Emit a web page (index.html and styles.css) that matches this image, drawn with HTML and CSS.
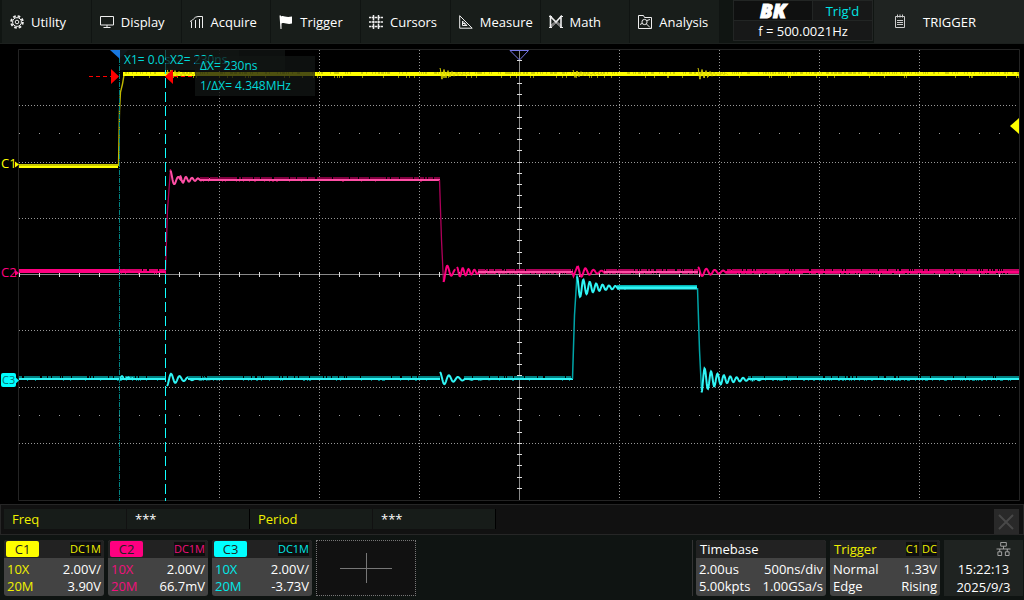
FILE: index.html
```
<!DOCTYPE html>
<html lang="en">
<head>
    <meta charset="UTF-8">
    <meta name="viewport" content="width=device-width, initial-scale=1.0">
    <title>Oscilloscope</title>
    <link rel="stylesheet" href="styles.css">
</head>
<body>

    <header class="topbar">
        <nav class="menu">
            <button class="menu-item">
                <svg class="icon" viewBox="0 0 14 14"><circle cx="7" cy="7" r="5.800" stroke-width="2" stroke-dasharray="2.600 1.950"/><circle cx="7" cy="7" r="4.400"/><circle cx="7" cy="7" r="1.800"/></svg>
                Utility
            </button>
            <button class="menu-item">
                <svg class="icon" viewBox="0 0 14 14"><path d="M0.500 1.500h13v8.500h-13zM7 10v2.500M3.500 12.500h7"/></svg>
                Display
            </button>
            <button class="menu-item">
                <svg class="icon" viewBox="0 0 14 14"><path d="M1.500 13V6.500M0 6.500C3 6 4 1.500 8 1.500h4.500V13M5.500 13V5M9.500 13V4"/></svg>
                Acquire
            </button>
            <button class="menu-item">
                <svg class="icon solid" viewBox="0 0 14 14"><path d="M0.500 0.500h1.500v1c3-1.500 4 1.500 11 0v7c-5 1.500-7-1.500-10.500 0V14H1.500z"/></svg>
                Trigger
            </button>
            <button class="menu-item">
                <svg class="icon" viewBox="0 0 14 14"><path stroke-width="1.500" stroke-dasharray="2.500 0.500" d="M4.500 0v14M9.500 0v14"/><path stroke-width="1.300" stroke-dasharray="2.500 0.500" d="M0 2.500h14M0 7h14M0 11.500h14"/></svg>
                Cursors
            </button>
            <button class="menu-item">
                <svg class="icon" viewBox="0 0 14 14"><path d="M0.700 0.700v12.500h12.500zM3.500 6v4.500h4.500zM3.500 8.500h2.500v2"/></svg>
                Measure
            </button>
            <button class="menu-item">
                <svg class="icon" viewBox="0 0 14 14"><path stroke="#888" fill="#777" d="M2 12.500V10l5-4 5 4v2.500L7 8z"/><path stroke-width="1.600" d="M1.500 12.500V1.500L7 7l5-5.500v11"/><path d="M0 1.500h3M11 1.500h3M0 12.500h3M11 12.500h3"/></svg>
                Math
            </button>
            <button class="menu-item">
                <svg class="icon" viewBox="0 0 14 14"><path d="M0.500 13.500V0.500h5l1 2h7v11z"/><circle cx="6.500" cy="7" r="2.600"/><path d="M8.500 9l3.500 3.500M2 9.500l2-1M9 5.500l3-1"/></svg>
                Analysis
            </button>
        </nav>
        <div class="state">
            <span class="brand">BK</span>
            <span class="trig-state">Trig'd</span>
            <span class="counter">f = 500.0021Hz</span>
        </div>
        <button class="side-title">
            <svg class="clip" viewBox="0 0 12 15"><path d="M1.500 2.500h9v11h-9zM3.500 0.500v3M6 0.500v3M8.500 0.500v3M3 6.500h6M3 8.500h6M3 10.500h6"/></svg>
            TRIGGER
        </button>
    </header>

    <main class="scope">
        <svg class="plot" viewBox="0 44 1024 460">
            <g class="frame"><path d="M18.500 49.500H1019.500V500.500H18.500z"/></g>
            <g id="grid"></g>
            <g id="traces"></g>
            <path class="cursor-a" d="M119.500 50V501"/>
            <path class="cursor-b" d="M165.500 50V501"/>
            <path fill="#1878e0" d="M110 50h10v9z"/>
            <path fill="#102438" d="M120 50h8l-8 8z"/>
            <path class="trig-pos" d="M510 50.500h18.500L519.500 60z"/>
            <path fill="#ff0" d="M1019 118v16l-9-8z"/>
            <path class="arrow-line" d="M89 76.500H112M174 76.500H195"/>
            <path fill="#f00" d="M111 69v15l8-7.500zM173 69v15l-8-7.500z"/>
            <text class="mark" fill="#ff0" x="1" y="168">C1</text>
            <path fill="#ff0" d="M15 161.500v6l4-3z"/>
            <text class="mark" fill="#ff0080" x="1" y="277">C2</text>
            <path fill="#ff0080" d="M15 270v6l4-3z"/>
            <rect fill="#0ff" x="1" y="373" width="15" height="14" rx="2"/>
            <path fill="#0ff" d="M14 376v9l5-4.500z"/>
            <text class="mark small" fill="#067070" x="2" y="384">C3</text>
        </svg>
        <div class="readout x1">X1= 0.0s</div>
        <div class="readout x2">X2= 230ns</div>
        <div class="readout delta">ΔX= 230ns<br>1/ΔX= 4.348MHz</div>
    </main>

    <section class="measure">
        <span class="m-name">Freq</span>
        <span class="m-value">***</span>
        <span class="m-name">Period</span>
        <span class="m-value">***</span>
        <button class="close" aria-label="Close measurements">
            <svg viewBox="0 0 24 24"><path d="M5 5l14 14M19 5L5 19"/></svg>
        </button>
    </section>

    <footer class="status">
        <button class="card ch1">
            <span class="card-head"><b class="tag">C1</b><i class="coupling">DC1M</i></span>
            <span class="row"><em>10X</em><span>2.00V/</span></span>
            <span class="row"><em>20M</em><span>3.90V</span></span>
        </button>
        <button class="card ch2">
            <span class="card-head"><b class="tag">C2</b><i class="coupling">DC1M</i></span>
            <span class="row"><em>10X</em><span>2.00V/</span></span>
            <span class="row"><em>20M</em><span>66.7mV</span></span>
        </button>
        <button class="card ch3">
            <span class="card-head"><b class="tag">C3</b><i class="coupling">DC1M</i></span>
            <span class="row"><em>10X</em><span>2.00V/</span></span>
            <span class="row"><em>20M</em><span>-3.73V</span></span>
        </button>
        <button class="add" aria-label="Add channel">
            <svg viewBox="0 0 52 30"><path d="M0 15.500h52M26.500 0v30"/></svg>
        </button>
        <div class="divider"></div>
        <button class="card timebase">
            <span class="card-head"><span class="title">Timebase</span></span>
            <span class="row"><span>2.00us</span><span>500ns/div</span></span>
            <span class="row"><span>5.00kpts</span><span>1.00GSa/s</span></span>
        </button>
        <button class="card trigger">
            <span class="card-head"><span class="title">Trigger</span><i class="coupling source">C1</i><i class="coupling">DC</i></span>
            <span class="row"><span>Normal</span><span>1.33V</span></span>
            <span class="row"><span>Edge</span><span>Rising</span></span>
        </button>
        <div class="clock">
            <svg class="lan" viewBox="0 0 15 15"><path d="M4.500 0.500h6v4h-6zM7.500 4.500v3M0 7.500h15M3.500 7.500v3M11.500 7.500v3M1.500 10.500h4v4h-4zM9.500 10.500h4v4h-4z"/></svg>
            <span>15:22:13</span>
            <span>2025/9/3</span>
        </div>
    </footer>

    <script src="scope.js"></script>
</body>
</html>
```
FILE: styles.css
```
* { box-sizing: border-box; }
body {
    margin: 0;
    min-height: 100vh;
    display: flex;
    flex-direction: column;
    background: #000;
    color: #fff;
    font-family: "Open Sans", "Noto Sans", sans-serif;
    font-size: 13px;
}
button { font: inherit; color: inherit; border: none; padding: 0; margin: 0; text-align: left; cursor: pointer; }
svg { display: block; fill: none; stroke: none; }

/* top bar */
.topbar { display: flex; height: 44px; background: #101512; border-bottom: 1px solid #1c201e; }
.menu { flex: 1; display: flex; padding-left: 2px; }
.menu-item {
    flex: 1;
    display: flex;
    align-items: center;
    gap: 7px;
    padding-left: 8px;
    background: #181d1a;
    border-right: 1px solid #101412;
}
.icon { width: 14px; height: 14px; stroke: #eee; stroke-width: 1; }
.solid { fill: #fff; stroke: none; }
.state {
    width: 140px;
    height: 41px;
    margin: 0 1px 0 13px;
    display: grid;
    grid-template-columns: 78px 1fr;
    grid-template-rows: 19px 19px;
    gap: 1px;
    padding: 1px;
    background: #222524;
    text-align: center;
    line-height: 20px;
}
.state span { background: #171818; }
.state .brand {
    background: #0f1010;
    font: italic 800 20px/19px "Open Sans", sans-serif;
    -webkit-text-stroke: 1px #fff;
}
.trig-state { color: #00e5e5; }
.counter { grid-column: 1 / 3; }
.side-title { width: 150px; display: flex; align-items: center; gap: 17px; padding-left: 20px; background: #1f2321; }
.clip { width: 12px; height: 15px; stroke: #ccc; }

/* waveform area */
.scope { position: relative; flex: 1; }
.plot { width: 100%; height: auto; }
.frame path { stroke: #242424; }
.cursor-a { stroke: #008080; stroke-dasharray: 5 1 1 1; }
.cursor-b { stroke: #1ff; stroke-dasharray: 10 4; }
.trig-pos { stroke: #7878e8; }
.arrow-line { stroke: #f00; stroke-dasharray: 4 3; }
.mark { font-size: 13px; }
.small { font-size: 11px; }
.readout {
    position: absolute;
    height: 20px;
    line-height: 20px;
    padding-left: 4px;
    color: #00d8d8;
    font-size: 12px;
    white-space: nowrap;
    background: rgba(18, 22, 20, 0.75);
}
.x1 { left: 120px; top: 6px; width: 119px; }
.x2 { left: 166px; top: 6px; width: 119px; }
.delta { left: 195px; top: 12px; width: 120px; height: 40px; padding-left: 5px; }

/* measurements */
.measure {
    display: flex;
    height: 31px;
    padding: 4px 4px 0 3px;
    border: 1px solid #262626;
    background: #111;
    line-height: 20px;
}
.m-name, .m-value { width: 123px; height: 20px; padding-left: 8px; background: #171c19; border-right: 1px solid #111; }
.m-name { color: #f0f000; }
.m-value { border-right-color: #000; }
.close { width: 25px; height: 25px; margin-left: auto; background: #292929; }
.close svg { width: 24px; height: 24px; stroke: #484848; stroke-width: 2; }

/* bottom status row */
.status { display: flex; gap: 4px; height: 65px; padding: 5px 1px 4px 4px; background: #0f1412; }
.card {
    width: 100px;
    display: flex;
    flex-direction: column;
    background: #434343;
    border-radius: 3px;
    overflow: hidden;
}
.card-head { display: flex; width: 100%; height: 18px; background: #222; line-height: 18px; align-items: center; margin-bottom: 3px; }
.tag { width: 33px; height: 16px; margin-left: 2px; border-radius: 2px; line-height: 17px; font-weight: normal; color: #222; text-align: center; }
.coupling { margin-left: auto; margin-right: 3px; font-style: normal; font-size: 11px; line-height: 14px; background: #0e0e0e; }
.row { display: flex; width: 100%; justify-content: space-between; padding: 0 3px; line-height: 17px; }
.row em { font-style: normal; }
.ch1 em, .ch1 .coupling { color: #f0f000; }
.ch2 em, .ch2 .coupling { color: #f0107c; }
.ch3 em, .ch3 .coupling { color: #00e8e8; }
.ch1 .tag { background: #ff0; }
.ch2 .tag { background: #ff0080; }
.ch3 .tag { background: #0ff; }
.add { width: 100px; display: flex; align-items: center; justify-content: center; background: #111; border: 1px dotted #777; }
.add svg { width: 52px; height: 30px; stroke: #777; }
.divider { width: 1px; margin-left: auto; margin-right: -1px; background: #333; }
.timebase { width: 130px; }
.trigger { width: 110px; }
.title { padding-left: 4px; }
.trigger .title, .trigger .coupling { color: #f0f000; }
.source + .coupling { margin-left: 0; }
.clock {
    width: 79px;
    display: flex;
    flex-direction: column;
    align-items: center;
    background: #1f2321;
    line-height: 18px;
}
.lan { width: 15px; height: 15px; margin: 2px 0 4px 40px; stroke: #aaa; }
```
FILE: scope.js
```
const NS = 'http://www.w3.org/2000/svg';
const grid = document.getElementById('grid');
const traces = document.getElementById('traces');

function path(parent, d, color, width, opacity) {
    let p = document.createElementNS(NS, 'path');
    p.setAttribute('d', d);
    p.setAttribute('stroke', color);
    p.setAttribute('stroke-width', width || 1);
    if (opacity) p.setAttribute('stroke-opacity', opacity);
    parent.appendChild(p);
    return p;
}

// graticule
let dots = '';
for (let x = 219; x < 1019; x += 100) {
    if (x === 519) continue;
    for (let y = 50; y < 500; y += 3) dots += `M${x} ${y}.5h1`;
}
for (let y of [105, 162, 218, 330, 387, 443]) {
    for (let x = 19; x < 1018; x += 3) dots += `M${x} ${y}.5h1`;
}
for (let y of [133, 415]) {
    for (let x = 19; x < 1018; x += 20) dots += `M${x} ${y}.5h1`;
}
path(grid, dots, '#999');
path(grid, 'M19 274.5H1019M519.5 50V500', '#888');
let ticks = '';
for (let x = 19; x < 1019; x += 20) ticks += `M${x}.5 272v5`;
for (let i = 1; i < 40; i++) ticks += `M517 ${Math.round(49 + i * 11.25)}.5h5`;
path(grid, ticks, '#ddd');

let seed = 7;
function rnd() {
    seed = (seed * 16807) % 2147483647;
    return seed / 2147483647;
}

// flat stretch: bright core, speckled dim rows above and below
function level(x0, x1, y, core, dim, low) {
    let top = '', bottom = '';
    for (let x = x0; x < x1; x++) {
        if (rnd() < 0.88) top += `M${x} ${y - 2}h1`;
        if (rnd() < (low || 0.12)) bottom += `M${x} ${y + 1.5}h1`;
    }
    path(traces, top, dim, 2);
    path(traces, bottom, dim);
    path(traces, `M${x0} ${y}H${x1}`, core, 2);
}

// damped oscillation around y, starting at x0
function ring(x0, y, amp, period, tau, len) {
    let d = '';
    for (let t = 0; t <= len; t += 0.5) {
        let v = y - amp * Math.exp(-t / tau) * Math.cos(2 * Math.PI * t / period);
        d += (t ? 'L' : 'M') + (x0 + t) + ' ' + v.toFixed(1);
    }
    return d;
}

// channel 1
path(traces, 'M19 165H118', '#c8c800', 2);
path(traces, 'M19 167H118', '#ff0', 2);
path(traces, 'M118.5 166L119.5 110L120.5 92L122.5 84L124 75', '#c0b800', 1.4);
path(traces, 'M123 74H1019', '#ff0', 4);
let speck = '', below = '';
for (let x = 125; x < 1019; x++) {
    if (rnd() < 0.4) speck += `M${x} 73h1`;
    if (rnd() < 0.08) below += `M${x} 77h1`;
}
path(traces, speck, '#a0a000', 2, 0.5);
path(traces, below, '#909000', 2);
for (let x of [167, 440, 573, 698]) {
    path(traces, ring(x, 74, x === 573 ? 4 : 6, 4, 14, 30), '#d8d000', 1);
}

// channel 2
const P = '#ff0080', PL = '#ff4fa5', PD = '#80003f', PM = '#b0005a';
path(traces, 'M19 271H119', P, 4);
level(119, 166, 272, P, '#d8006c');
path(traces, ring(119, 271, 3, 5, 10, 14), P, 1);
path(traces, 'M165.5 271L167.5 210L170.5 169', '#a80058', 1.3);
path(traces, ring(170.5, 179.5, 9, 8, 6, 12) + ring(180, 179.5, 4, 6, 14, 50), PL, 2);
level(200, 440, 180, PL, PD);
path(traces, 'M439.5 180L441.5 240L443.5 282', '#b0005a', 1.3);
path(traces, ring(443.5, 272, -10, 8, 8, 12) + ring(457, 272, 5, 5.8, 22, 60), P, 2);
level(478, 573, 272, PL, PM, 0.7);
path(traces, ring(577.5, 272, 6, 8, 16, 60) + 'M572 272L573.5 276L577.5 266', P, 2);
level(604, 698, 272, PL, PM, 0.7);
path(traces, ring(698, 272, 5, 8.4, 20, 60), P, 2);
level(726, 1019, 272, P, '#c00060', 0.8);

// channel 3
const C = '#30f5f5', CD = '#007f80';
level(19, 166, 379, C, CD);
path(traces, ring(119, 378, -3, 6, 8, 14), C, 1.5);
path(traces, ring(167, 379, -7, 8.4, 14, 60), C, 2);
level(188, 440, 379, C, CD);
path(traces, ring(440, 379, 7, 9, 14, 60), C, 2);
level(464, 573, 379, C, CD);
path(traces, 'M572.5 379L574.5 315L577 275', '#00a5a8', 1.5);
path(traces, ring(577, 287.5, 11, 6.4, 19, 60), C, 2);
path(traces, 'M617 286H697', '#00b4b4', 2);
path(traces, 'M617 288H697', C, 3);
path(traces, 'M697.5 288L699.5 350L701.5 390', '#00a5a8', 1.5);
path(traces, ring(701.5, 379.5, -13, 6.4, 20, 60), C, 2);
level(748, 1019, 379, C, CD, 0.3);
```
